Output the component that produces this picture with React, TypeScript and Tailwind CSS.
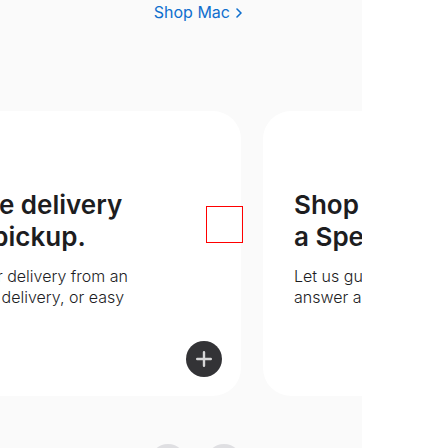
import React from "react";

type CardProps = { title: string[]; body: string[]; action?: boolean };

function Card({ title, body, action }: CardProps) {
  return (
    <article className="relative h-[285px] w-[400px] shrink-0 rounded-[28px] bg-white px-[31px] pt-[78px]">
      <h2 className="text-[26px] leading-8 font-semibold text-[#1d1d1f]">
        {title.map((line) => (
          <span key={line} className="block whitespace-nowrap">{line}</span>
        ))}
      </h2>
      <p className="mt-[13px] text-base leading-[21px] font-light text-[#1d1d1f]">
        {body.map((line) => (
          <span key={line} className="block whitespace-nowrap">{line}</span>
        ))}
      </p>
      {action && (
        <button
          type="button"
          aria-label="Learn more"
          className="absolute right-[19px] bottom-[19px] flex size-9 items-center justify-center rounded-full bg-[#333336]"
        >
          <svg viewBox="0 0 36 36" className="size-9" fill="none" stroke="#d6d6d7" strokeWidth="2.4" strokeLinecap="round" aria-hidden="true">
            <path d="M18 11.2v13.6M11.2 18h13.6" />
          </svg>
        </button>
      )}
    </article>
  );
}

export default function App() {
  return (
    <div className="h-screen overflow-hidden bg-white font-['Inter',sans-serif]">
      <main className="relative mr-[86px] flex h-full flex-col overflow-hidden bg-[#fafafa]">
        <div className="flex h-[111px] shrink-0 justify-end pr-[120px]">
          <a href="#mac" className="flex h-6 items-center gap-1.5 text-base text-[#0f6fce]">
            Shop Mac
            <svg viewBox="0 0 6 10" className="mt-0.5 h-[10px] w-[6px]" fill="none" stroke="currentColor" strokeWidth="1.6" strokeLinecap="round" strokeLinejoin="round" aria-hidden="true">
              <path d="M1 1l4 4-4 4" />
            </svg>
          </a>
        </div>
        <section className="-ml-[159px] flex shrink-0 gap-[22px]">
          <Card
            title={["Get flexible delivery", "and easy pickup."]}
            body={["Choose two-hour delivery from an", "Apple Store, free delivery, or easy"]}
            action
          />
          <Card title={["Shop one on one with", "a Specialist."]} body={["Let us guide you and", "answer all your questions."]} />
        </section>
        <nav className="mt-12 flex shrink-0 justify-end gap-5 pr-[120px]">
          <button type="button" aria-label="Previous" className="size-9 rounded-full bg-[#dfdfe2]" />
          <button type="button" aria-label="Next" className="size-9 rounded-full bg-[#dfdfe2]" />
        </nav>
        <div className="absolute top-[206px] right-[119px] size-[37px] border border-[#ff0000]" />
      </main>
    </div>
  );
}
